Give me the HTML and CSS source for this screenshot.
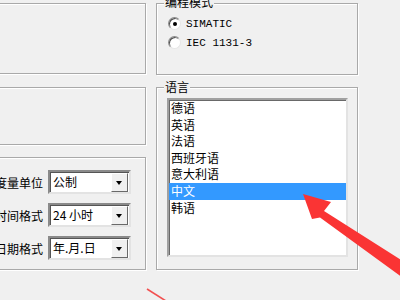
FILE: index.html
```html
<!DOCTYPE html>
<html lang="zh-CN">
<head>
  <meta charset="UTF-8" />
  <title>设置</title>
  <link rel="stylesheet" href="styles.css">
</head>
<body>
  <div class="page">
    <div class="col col-left">
      <div class="group box-top"></div>
      <div class="group box-mid"></div>
      <div class="group box-units">
        <div class="field">
          <label>度量单位</label>
          <div class="combo"><span class="combo-text">公制</span><span class="combo-btn"></span></div>
        </div>
        <div class="field">
          <label>时间格式</label>
          <div class="combo"><span class="combo-text">24 小时</span><span class="combo-btn"></span></div>
        </div>
        <div class="field">
          <label>日期格式</label>
          <div class="combo"><span class="combo-text">年.月.日</span><span class="combo-btn"></span></div>
        </div>
      </div>
    </div>

    <div class="col col-right">
      <div class="group box-mode">
        <div class="legend">编程模式</div>
        <div class="radio-row"><span class="radio checked"></span><span class="radio-label">SIMATIC</span></div>
        <div class="radio-row"><span class="radio"></span><span class="radio-label">IEC 1131-3</span></div>
      </div>
      <div class="group box-lang">
        <div class="legend">语言</div>
        <ul class="listbox">
          <li>德语</li>
          <li>英语</li>
          <li>法语</li>
          <li>西班牙语</li>
          <li>意大利语</li>
          <li class="selected">中文</li>
          <li>韩语</li>
        </ul>
      </div>
    </div>
  </div>

  <!-- red annotation marks -->
  <svg class="marks" width="400" height="300" viewBox="0 0 400 300">
    <polygon points="303,194 331,202 324,211 414,268 406,280 320,217.5 312,219" fill="#fa3434" />
    <line x1="147" y1="289" x2="166" y2="301" stroke="#f25050" stroke-width="1.6" />
  </svg>
</body>
</html>
```

FILE: styles.css
```css
* {
  box-sizing: border-box;
}

body {
  margin: 0;
  width: 400px;
  height: 300px;
  overflow: hidden;
  background: #f0f0f0;
  font-family: "Noto Sans CJK SC", "Liberation Sans", sans-serif;
  font-size: 12px;
  color: #000;
  position: relative;
}

.page {
  display: flex;
  gap: 10px;
  margin-left: -20px;
  padding-top: 3px;
}

.col {
  display: flex;
  flex-direction: column;
}
.col-left {
  width: 166px;
}
.col-right {
  width: 202px;
}

.group {
  border: 1px solid #a9a9a9;
  box-shadow: inset 1px 1px 0 #fff, 1px 1px 0 #fff;
}

.box-top {
  height: 71px;
}
.box-mid {
  height: 58px;
  margin-top: 13px;
}
.box-units {
  height: 113px;
  margin-top: 12px;
  padding: 12px 14px 0 0;
  display: flex;
  flex-direction: column;
  gap: 9px;
}

.box-mode {
  height: 72px;
}
.box-mode .legend {
  margin-top: -10px;
}
.box-lang {
  height: 183px;
  margin-top: 12px;
}

.legend {
  display: table;
  margin: -9px 0 0 7px;
  padding: 0 1px;
  background: #f0f0f0;
  line-height: 16px;
}

/* combo rows */
.field {
  display: flex;
  justify-content: flex-end;
  align-items: center;
  gap: 5px;
  height: 24px;
}
.field label {
  white-space: nowrap;
}

.combo {
  width: 83px;
  height: 24px;
  display: flex;
  background: #fff;
  border: 2px solid;
  border-color: #8a8a8a #e3e3e3 #e3e3e3 #8a8a8a;
  box-shadow: inset 1px 1px 0 #555;
}
.combo-text {
  flex: 1;
  padding-left: 3px;
  line-height: 19px;
}
.combo-btn {
  width: 17px;
  height: 19px;
  margin: 1px 1px 0 0;
  background: #f0f0f0;
  border: 1px solid;
  border-color: #fff #696969 #696969 #fff;
  position: relative;
}
.combo-btn::after {
  content: "";
  position: absolute;
  left: 4px;
  top: 7px;
  border-left: 3.5px solid transparent;
  border-right: 3.5px solid transparent;
  border-top: 4px solid #000;
}

/* radios */
.radio-row {
  display: flex;
  align-items: center;
  height: 19px;
  padding-left: 11px;
}
.legend + .radio-row {
  margin-top: 4px;
}
.radio {
  width: 13px;
  height: 13px;
  border-radius: 50%;
  border: 1px solid;
  border-color: #8a8a8a #e6e6e6 #e6e6e6 #8a8a8a;
  background: #fff;
  box-shadow: inset 1px 1px 0 #505050;
  position: relative;
}
.radio.checked::after {
  content: "";
  position: absolute;
  left: 4px;
  top: 4px;
  width: 4px;
  height: 4px;
  border-radius: 50%;
  background: #000;
}
.radio-label {
  margin-left: 5px;
  font-family: "Liberation Mono", monospace;
  font-size: 11px;
}

/* list */
.listbox {
  list-style: none;
  margin: 3px 0 0 10px;
  padding: 0;
  width: 181px;
  height: 159px;
  background: #fff;
  border: 2px solid;
  border-color: #a0a0a0 #e3e3e3 #e3e3e3 #a0a0a0;
  box-shadow: inset 1px 1px 0 #696969;
}
.listbox li {
  height: 16.6px;
  line-height: 16.6px;
  padding-left: 2px;
}
.listbox li.selected {
  background: #3399ff;
  color: #fff;
}

.marks {
  position: absolute;
  left: 0;
  top: 0;
}
```
